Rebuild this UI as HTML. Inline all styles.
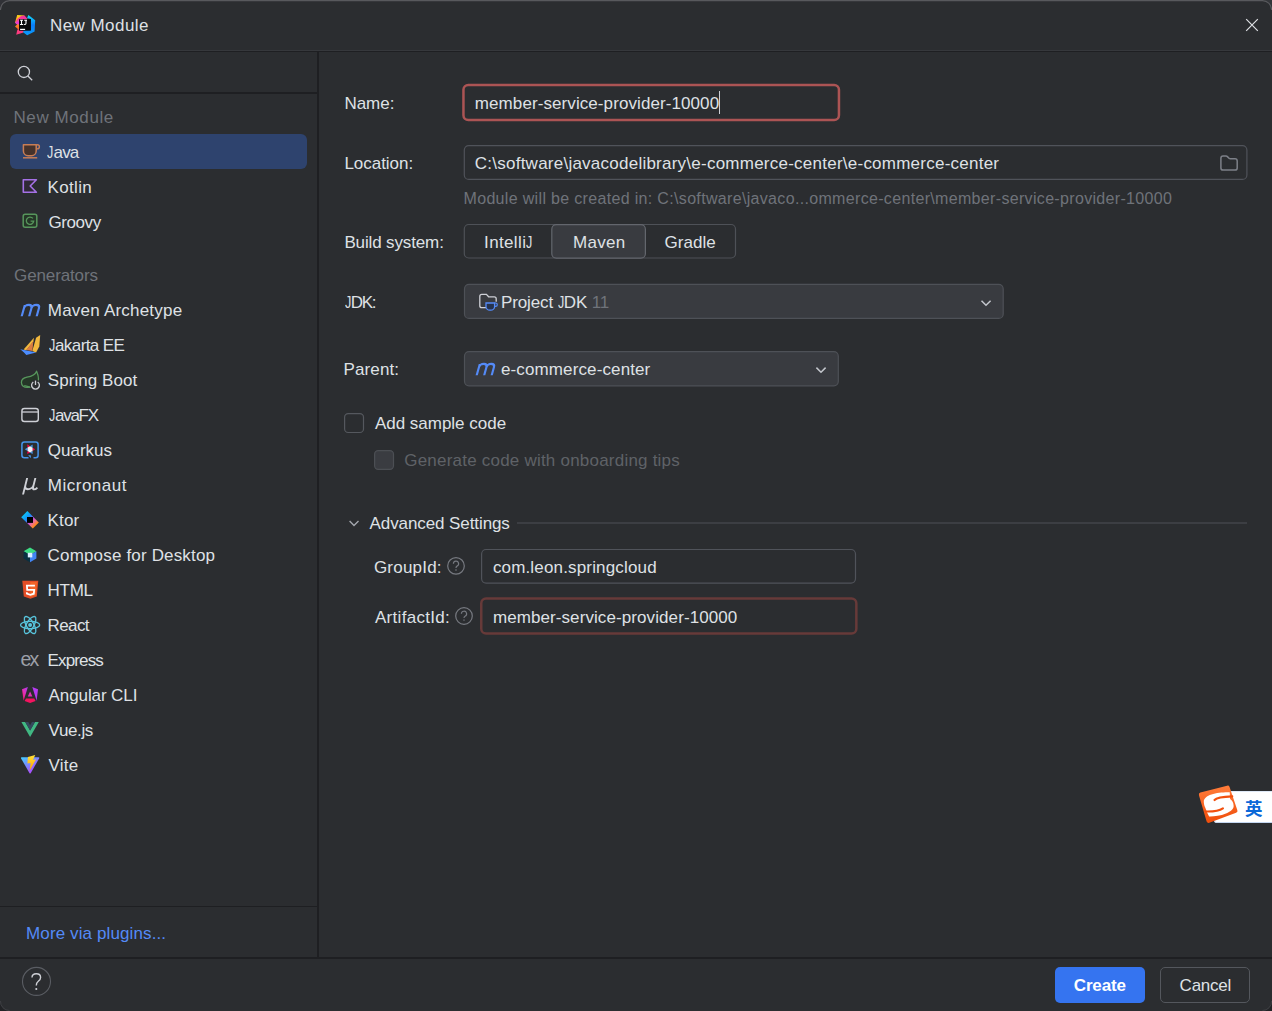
<!DOCTYPE html>
<html lang="en">
<head>
<meta charset="utf-8">
<title>New Module</title>
<style>
*{box-sizing:border-box;margin:0;padding:0}
html,body{width:1272px;height:1011px;overflow:hidden;background:#2b2d30}
body{font-family:"Liberation Sans","Noto Sans CJK SC",sans-serif;font-size:17px;color:#dfe1e5;position:relative}
.win{position:absolute;left:0;top:0;width:1272px;height:1011px;background:#2b2d30;overflow:hidden}

.abs{position:absolute}
.t{position:absolute;white-space:nowrap;line-height:20px;height:20px;margin-top:2px}
.hl{position:absolute;height:2px;background:#1e1f22}
.vl{position:absolute;width:2px;background:#1e1f22}
.gray{color:#6f737a}
.sel{position:absolute;left:10px;top:134px;width:297px;height:35px;border-radius:6px;background:#2e436e}
.inp{position:absolute;border:1px solid #4e5157;border-radius:5px;background:#2b2d30}
.combo{position:absolute;border:1px solid #4e5157;border-radius:5px;background:#393b40}
.cb{position:absolute;width:20px;height:20px;border:1px solid #6f737a;border-radius:4px}
svg{position:absolute;overflow:visible}
.J{display:inline-block;transform:scaleX(.74);transform-origin:0 0;margin-right:-2.3px;letter-spacing:0}
/*FIT*/
#title{left:49.9px !important;letter-spacing:0.461px}
#h1{left:13.5px !important;letter-spacing:0.586px}
#l1{left:47.4px !important;letter-spacing:-0.869px}
#l2{left:47.5px !important;letter-spacing:0.34px}
#l3{left:48.5px !important;letter-spacing:-0.42px}
#h2{left:14.1px !important;letter-spacing:-0.131px}
#l4{left:47.8px !important;letter-spacing:0.214px}
#l5{left:48.8px !important;letter-spacing:-0.586px}
#l6{left:47.8px !important;letter-spacing:0.06px}
#l7{left:48.8px !important;letter-spacing:-1.28px}
#l8{left:47.8px !important;letter-spacing:0.001px}
#l9{left:47.8px !important;letter-spacing:0.5px}
#l10{left:47.6px !important;letter-spacing:0.167px}
#l11{left:47.6px !important;letter-spacing:0.166px}
#l12{left:47.6px !important;letter-spacing:-0.301px}
#l13{left:47.6px !important;letter-spacing:-0.625px}
#l14{left:47.6px !important;letter-spacing:-0.872px}
#l15{left:48.6px !important;letter-spacing:-0.1px}
#l16{left:48.6px !important;letter-spacing:-0.38px}
#l17{left:48.6px !important;letter-spacing:0.201px}
#more{left:26.1px !important;letter-spacing:0.112px}
#create{left:1073.8px !important;letter-spacing:-0.16px}
#cancel{left:1179.6px !important;letter-spacing:-0.24px}
#r1{left:344.4px !important;letter-spacing:0.0px}
#v1{left:474.8px !important;letter-spacing:0.087px}
#r2{left:344.4px !important;letter-spacing:-0.025px}
#v2{left:474.8px !important;letter-spacing:0.242px}
#v3{left:463.5px !important;letter-spacing:0.329px}
#r3{left:344.4px !important;letter-spacing:-0.134px}
#b1{left:484.1px !important;letter-spacing:0.354px}
#b2{left:573.1px !important;letter-spacing:0.25px}
#b3{left:664.6px !important;letter-spacing:0.02px}
#r4{left:344.6px !important;letter-spacing:-1.27px}
#j1{left:501.0px !important;letter-spacing:-0.128px}
#r5{left:343.6px !important;letter-spacing:0.1px}
#p1{left:501.0px !important;letter-spacing:0.119px}
#c1{left:374.9px !important;letter-spacing:-0.012px}
#c2{left:404.2px !important;letter-spacing:0.218px}
#a1{left:369.6px !important;letter-spacing:-0.093px}
#g1{left:373.9px !important;letter-spacing:0.216px}
#g2{left:492.9px !important;letter-spacing:0.161px}
#g3{left:374.9px !important;letter-spacing:0.31px}
#g4{left:492.9px !important;letter-spacing:0.09px}
/*ENDFIT*/
</style>
</head>
<body>
<div class="win">

<svg id="bg" width="1272" height="1011" viewBox="0 0 1272 1011" style="left:0;top:0" fill="none">
<rect x="463.45" y="85.05" width="375.5" height="34.9" rx="4.8" stroke="#ac5454" stroke-width="2.5"/>
<rect x="464.3" y="145.6" width="782.6" height="33.8" rx="4.5" stroke="#50535a" stroke-width="1.2"/>
<rect x="464.3" y="224.5" width="271.2" height="33.5" rx="4.5" stroke="#4e5157" stroke-width="1.2"/>
<rect x="551.8" y="224.7" width="93.6" height="33.4" rx="4.5" fill="#393b40" stroke="#63666d" stroke-width="1.2"/>
<rect x="464.5" y="284.4" width="538.7" height="34" rx="4.5" fill="#393b40" stroke="#4e5157" stroke-width="1.2"/>
<rect x="464.5" y="351.7" width="373.8" height="34.1" rx="4.5" fill="#393b40" stroke="#4e5157" stroke-width="1.2"/>
<rect x="344.6" y="413.7" width="18.9" height="18.8" rx="3.6" stroke="#55585e" stroke-width="1.2"/>
<rect x="374.6" y="450.6" width="18.9" height="18.8" rx="3.6" fill="#3a3c41" stroke="#4c4f54" stroke-width="1.2"/>
<rect x="481.6" y="549.5" width="373.9" height="33.6" rx="4.5" stroke="#50535a" stroke-width="1.2"/>
<rect x="481.25" y="598.6" width="375.1" height="35" rx="4.8" stroke="#673a39" stroke-width="2.5"/>
</svg>
<!-- title bar -->
<div class="t" id="title" style="left:50px;top:14px">New Module</div>
<div class="hl" style="left:0;top:50px;width:1272px;height:1px;background:#36383c"></div><div class="hl" style="left:0;top:51px;width:1272px;height:1px"></div>

<!-- left panel -->
<div class="vl" style="left:317px;top:52px;height:906px"></div>
<div class="hl" style="left:0;top:92px;width:317px"></div>
<div class="t gray" id="h1" style="left:14px;top:106px">New Module</div>
<div class="sel"></div>
<div class="t" id="l1" style="left:48px;top:141px"><span class="J">J</span>ava</div>
<div class="t" id="l2" style="left:48px;top:176px">Kotlin</div>
<div class="t" id="l3" style="left:48px;top:211px">Groovy</div>
<div class="t gray" id="h2" style="left:14px;top:264px">Generators</div>
<div class="t" id="l4" style="left:48px;top:299px">Maven Archetype</div>
<div class="t" id="l5" style="left:48px;top:334px"><span class="J">J</span>akarta EE</div>
<div class="t" id="l6" style="left:48px;top:369px">Spring Boot</div>
<div class="t" id="l7" style="left:48px;top:404px"><span class="J">J</span>avaFX</div>
<div class="t" id="l8" style="left:48px;top:439px">Quarkus</div>
<div class="t" id="l9" style="left:48px;top:474px">Micronaut</div>
<div class="t" id="l10" style="left:48px;top:509px">Ktor</div>
<div class="t" id="l11" style="left:48px;top:544px">Compose for Desktop</div>
<div class="t" id="l12" style="left:48px;top:579px">HTML</div>
<div class="t" id="l13" style="left:48px;top:614px">React</div>
<div class="t" id="l14" style="left:48px;top:649px">Express</div>
<div class="t" id="l15" style="left:48px;top:684px">Angular CLI</div>
<div class="t" id="l16" style="left:48px;top:719px">Vue.js</div>
<div class="t" id="l17" style="left:48px;top:754px">Vite</div>
<div class="hl" style="left:0;top:906px;width:317px;height:1px"></div>
<div class="t" id="more" style="left:26px;top:922px;color:#548af7">More via plugins...</div>

<!-- bottom bar -->
<div class="hl" style="left:0;top:957px;width:1272px"></div>
<div class="abs" style="left:1055px;top:967px;width:90px;height:36px;border-radius:5px;background:#3574f0"></div>
<div class="t" id="create" style="left:1074px;top:974px;font-weight:bold;color:#fff">Create</div>
<div class="abs" style="left:1160px;top:967px;width:90px;height:36px;border-radius:5px;border:1px solid #54575d"></div>
<div class="t" id="cancel" style="left:1180px;top:974px">Cancel</div>

<!-- right form -->
<div class="t" id="r1" style="left:344px;top:92px">Name:</div>
<div class="t" id="v1" style="left:475px;top:92px">member-service-provider-10000</div>
<div class="abs caret" style="left:719px;top:91px;width:1px;height:23px;background:#ced0d6"></div>

<div class="t" id="r2" style="left:344px;top:152px">Location:</div>
<div class="t" id="v2" style="left:475px;top:152px">C:\software\javacodelibrary\e-commerce-center\e-commerce-center</div>
<div class="t gray" id="v3" style="left:464px;top:187px;font-size:16px">Module will be created in: C:\software\javaco...ommerce-center\member-service-provider-10000</div>

<div class="t" id="r3" style="left:344px;top:231px">Build system:</div>
<div class="t" id="b1" style="left:485px;top:231px">Intelli<span class="J">J</span></div>
<div class="t" id="b2" style="left:573px;top:231px">Maven</div>
<div class="t" id="b3" style="left:665px;top:231px">Gradle</div>

<div class="t" id="r4" style="left:344px;top:291px"><span class="J">J</span>DK:</div>
<div class="t" id="j1" style="left:501px;top:291px">Project <span class="J">J</span>DK <span class="gray">11</span></div>

<div class="t" id="r5" style="left:344px;top:358px">Parent:</div>
<div class="t" id="p1" style="left:500px;top:358px">e-commerce-center</div>

<div class="t" id="c1" style="left:374px;top:412px">Add sample code</div>
<div class="t" id="c2" style="left:404px;top:449px;color:#5f6267">Generate code with onboarding tips</div>

<div class="t" id="a1" style="left:369px;top:512px">Advanced Settings</div>
<div class="hl" style="left:517px;top:522px;width:730px;height:2px;background:#3c3e43"></div>

<div class="t" id="g1" style="left:374px;top:556px">GroupId:</div>
<div class="t" id="g2" style="left:493px;top:556px">com.leon.springcloud</div>

<div class="t" id="g3" style="left:374px;top:606px">ArtifactId:</div>
<div class="t" id="g4" style="left:493px;top:606px">member-service-provider-10000</div>


<!-- IME -->
<div class="abs" style="left:1214px;top:791px;width:70px;height:32px;background:#fff;border-radius:3px;box-shadow:inset 0 -1px 0 #c3d6f0,inset 0 1px 0 #dfe9f7"></div>
<div class="t" id="ime" style="left:1245px;top:797px;font-family:'Liberation Sans','Noto Sans CJK SC',sans-serif;font-weight:bold;font-size:17.5px;color:#0b68d8">英</div>
<!--ICONS-->
<svg id="ic" width="1272" height="1011" viewBox="0 0 1272 1011" style="left:0;top:0;pointer-events:none" fill="none">
<defs>
<linearGradient id="gIJ1" x1="0" y1="0" x2="0" y2="1"><stop offset="0" stop-color="#fdd21a"/><stop offset="1" stop-color="#fc5a2a"/></linearGradient>
<linearGradient id="gIJ2" x1="0" y1="0" x2="0" y2="1"><stop offset="0" stop-color="#10dcfc"/><stop offset="0.5" stop-color="#0b7dfa"/><stop offset="1" stop-color="#0b9dfb"/></linearGradient>
<linearGradient id="gKt" x1="0" y1="0" x2="1" y2="1"><stop offset="0.15" stop-color="#08c8f6"/><stop offset="0.4" stop-color="#1a8cf8"/><stop offset="0.56" stop-color="#c14fe0"/><stop offset="0.68" stop-color="#f0708a"/><stop offset="0.82" stop-color="#ff8a14"/></linearGradient>
<linearGradient id="gAn" x1="0" y1="1" x2="1" y2="0"><stop offset="0" stop-color="#fb0f55"/><stop offset="0.5" stop-color="#e231b9"/><stop offset="1" stop-color="#a83cf8"/></linearGradient>
<linearGradient id="gVi" x1="0" y1="0" x2="0.8" y2="1"><stop offset="0" stop-color="#41d1ff"/><stop offset="1" stop-color="#bd34fe"/></linearGradient>
<linearGradient id="gVb" x1="0" y1="0" x2="0" y2="1"><stop offset="0" stop-color="#ffe23a"/><stop offset="1" stop-color="#ffa000"/></linearGradient>
<linearGradient id="gSg" x1="0" y1="0" x2="0" y2="1"><stop offset="0" stop-color="#ff7a38"/><stop offset="1" stop-color="#f0500e"/></linearGradient>
</defs>

<!-- window corners -->
<path d="M0,0 H9 A9,9 0 0 0 0,9 Z" fill="#303136"/><path d="M1272,0 H1263 A9,9 0 0 1 1272,9 Z" fill="#34363a"/>
<path d="M0.5,10 A9,9 0 0 1 9.5,0.6 H1262.5 A9,9 0 0 1 1271.5,10" stroke="#58595d" stroke-width="1.2"/>
<path d="M0,1011 H9 A9,9 0 0 1 0,1002 Z" fill="#222326"/><path d="M1272,1011 H1263 A9,9 0 0 0 1272,1002 Z" fill="#222326"/>
<path d="M0.5,1001 A9,9 0 0 0 9.5,1010.5" stroke="#3e3f43" stroke-width="1"/><path d="M1271.5,1001 A9,9 0 0 1 1262.5,1010.5" stroke="#3e3f43" stroke-width="1"/>
<!-- IntelliJ logo -->
<g>
<polygon points="17.2,15 24.5,15.4 20,20 19.5,31 17.4,28.5 15,26.4 17.2,24.6 15,22.6" fill="url(#gIJ1)"/>
<polygon points="20.8,16.2 24.5,15.4 27.2,18.4 27,20 19,20 15,22.6 17.5,19" fill="#f5349b"/>
<polygon points="15,22.6 19.2,20 19.2,24.5 16.5,24.2" fill="#e63bd0"/>
<polygon points="16.2,34.7 17.4,29.5 24.4,30.4 23.4,32.4" fill="#fb3c7e"/>
<polygon points="27,18.2 28.4,15 35.2,20.2 34.6,31.4 27.2,35.2 23,32.2 24,30 31,30 31,19" fill="url(#gIJ2)"/>
<rect x="19" y="19.2" width="11.8" height="11.5" fill="#0a0a0c"/>
<rect x="20.1" y="28.8" width="5" height="1.2" fill="#fff"/>
<path d="M20,20.3h3M21.5,20.3v4.2M20,24.5h3M24.2,20.3h2.8M26,20.3v3c0,1.4-1.6,1.4-2.2,0.9" stroke="#fff" stroke-width="1.1"/>
</g>
<!-- close -->
<path d="M1246.2,19.2 L1257.8,30.8 M1257.8,19.2 L1246.2,30.8" stroke="#dfe1e5" stroke-width="1.2"/>
<!-- search -->
<circle cx="23.9" cy="71.9" r="5.6" stroke="#ced0d6" stroke-width="1.3"/>
<path d="M27.9,76 L32.2,80.2" stroke="#ced0d6" stroke-width="1.3"/>

<!-- Java -->
<path d="M23.4,144.7 H36.2 V151 A4.7,4.7 0 0 1 31.5,155.7 H28.1 A4.7,4.7 0 0 1 23.4,151 Z" fill="#45322b" stroke="#c77d55" stroke-width="1.5" stroke-linejoin="round"/>
<path d="M36.2,144.7 H37.3 A2.1,2.1 0 0 1 37.3,148.9 H36.2" stroke="#c77d55" stroke-width="1.4"/>
<path d="M23,157.8 H37.2" stroke="#c77d55" stroke-width="1.5"/>
<!-- Kotlin -->
<path d="M23.3,179.7 H36.4 L30.2,186 L36.4,192.3 H23.3 Z" fill="#2f2936" stroke="#a571e6" stroke-width="1.6" stroke-linejoin="round"/>
<!-- Groovy -->
<rect x="23.2" y="214.2" width="13.6" height="13" rx="2" fill="#253627" stroke="#57965c" stroke-width="1.5"/>
<path d="M32.9,218.4 A3.7,3.7 0 1 0 33.7,221.2 H30.6" stroke="#57965c" stroke-width="1.3"/>

<!-- Maven m -->
<g transform="translate(21.7,316.3) skewX(-15.5)" stroke="#548af7" stroke-width="2.2">
<path d="M0,0 V-11.4 M0,-8 C0,-10.4 1.9,-11.4 3.8,-11.4 C6,-11.4 7.5,-10.3 7.5,-8 V0 M7.5,-8 C7.5,-10.4 9.4,-11.4 11.3,-11.4 C13.5,-11.4 15,-10.3 15,-8 V0"/>
</g>
<!-- Jakarta EE -->
<polygon points="40.2,335.1 36.1,337.8 32.3,350.9 36.1,352.5 39.3,346.5" fill="#f2b83e"/>
<polygon points="33.9,337.8 23.6,349.6 26.3,350.3 33.4,341.5" fill="#f2b83e"/>
<polygon points="33.4,341.1 26.3,350 32.3,350.9" fill="#d97b42"/>
<polygon points="20.3,349.2 34,352 36.1,352.5 26.3,355 24,352.5" fill="#4c8dff"/>
<!-- Spring Boot -->
<path d="M36.6,371.2 C35,375.5 31,376.5 27,377.2 C23,378 21.4,380 21.4,382.4 C21.4,385.5 24,387.6 27.5,387.4 L31,387.2 C35,386.5 38.2,383.5 38.5,379 C38.6,376.5 37.6,373.5 36.6,371.2 Z" fill="#253627" stroke="#57965c" stroke-width="1.3" stroke-linejoin="round"/>
<path d="M24.2,385.6 L30.5,387.2" stroke="#57965c" stroke-width="1.2"/>
<circle cx="35.5" cy="385.2" r="5.6" fill="#2b2d30"/>
<path d="M33.3,382 A3.9,3.9 0 1 0 37.7,382" stroke="#ced0d6" stroke-width="1.3"/>
<path d="M35.5,380.6 V385" stroke="#ced0d6" stroke-width="1.3"/>
<!-- JavaFX -->
<rect x="21.9" y="408.5" width="16.4" height="13" rx="2.5" stroke="#ced0d6" stroke-width="1.4"/>
<path d="M21.9,412 H38.3" stroke="#ced0d6" stroke-width="1.3"/>
<!-- Quarkus -->
<path d="M28.5,457.7 H24.4 A2.5,2.5 0 0 1 21.9,455.2 V444.4 A2.5,2.5 0 0 1 24.4,441.9 H35.6 A2.5,2.5 0 0 1 38.1,444.4 V455.2 A2.5,2.5 0 0 1 35.6,457.7 H33.5" stroke="#4695eb" stroke-width="1.5"/>
<path d="M28.2,455 L30.6,458.2 L31,455.5" fill="#4695eb"/>
<polygon points="27.2,444.3 30,446.2 27.6,447.6" fill="#ff004a"/>
<polygon points="32.6,444.6 32.6,447.8 30,446.2" fill="#4695eb"/>
<polygon points="35.2,449.3 32.6,450.9 32.6,447.8" fill="#ff004a"/>
<polygon points="24.8,449.3 27.6,447.6 27.6,450.9" fill="#4695eb"/>
<polygon points="27.2,454 27.6,450.9 30,452.4" fill="#ff004a"/>
<polygon points="32.6,454 30,452.4 32.6,450.9" fill="#4695eb"/>
<polygon points="30,446.2 32.6,447.8 32.6,450.9 30,452.4 27.6,450.9 27.6,447.6" fill="#f3f3f5"/>
<!-- Micronaut mu -->
<g transform="translate(24.3,489.6) skewX(-14)" stroke="#ced0d6" stroke-width="1.9">
<path d="M0,-11.5 V5 M0,-4 C0,-1.2 1.6,-0.3 3.6,-0.3 C6,-0.3 8.2,-2 8.2,-5 V-11.5 M8.2,-11.5 V-2.6 C8.2,-0.8 9,-0.2 10,-0.2 C10.9,-0.2 11.8,-0.8 12.6,-2"/>
</g>
<!-- Ktor -->
<polygon points="27.4,510.9 38.8,522.6 32.8,528.5 21.2,517.2" fill="url(#gKt)"/>
<rect x="27" y="517" width="6" height="5.9" fill="#000"/>
<!-- Compose -->
<polygon points="30,547.6 36.4,551.3 30,555 23.6,551.3" fill="#3ddc84"/>
<polygon points="23.6,551.3 30,555 30,562.2 23.6,558.6" fill="#083042"/>
<polygon points="36.4,551.3 36.4,558.6 30,562.2 30,555" fill="#4285f4"/>
<rect x="27.8" y="552.8" width="4.5" height="4.6" fill="#d9efff"/>
<!-- HTML5 -->
<polygon points="22.3,580.7 38.3,580.7 36.8,596.6 30.3,598.7 23.8,596.6" fill="#e44d26"/>
<polygon points="30.3,582 37,582 35.7,595.6 30.3,597.3" fill="#f16529"/>
<path d="M34.9,585.7 H26.9 L27.2,589.9 H34.2 L33.8,593.7 L30.3,594.8 L26.9,593.7 L26.8,592.2" stroke="#fff" stroke-width="1.8"/>
<!-- React -->
<g stroke="#58c4dc" stroke-width="1.35">
<ellipse cx="30.1" cy="625" rx="9.6" ry="3.7"/>
<ellipse cx="30.1" cy="625" rx="9.6" ry="3.7" transform="rotate(60 30.1 625)"/>
<ellipse cx="30.1" cy="625" rx="9.6" ry="3.7" transform="rotate(120 30.1 625)"/>
</g>
<circle cx="30.1" cy="625" r="2" fill="#58c4dc"/>
<!-- Express -->
<text x="20.4" y="665.8" font-family="Liberation Sans, sans-serif" font-size="19.5" fill="#9da0a8" letter-spacing="-1.7">ex</text>
<!-- Angular -->
<polygon points="22,689.2 27.9,687.1 23.6,700.7" fill="url(#gAn)"/>
<polygon points="32.3,687.1 38,689.2 36.6,700.7" fill="#b63bf0"/>
<polygon points="30.1,691.6 32.4,696.4 27.8,696.4" fill="#e231b9"/>
<polygon points="26,698.4 34.2,698.4 35.6,700.9 30.1,703 24.6,700.9" fill="#f4135f"/>
<!-- Vue -->
<polygon points="21.4,722 25.2,722 30.1,730.5 35,722 38.8,722 30.1,737" fill="#41b883"/>
<polygon points="25.2,722 28.3,722 30.1,725.2 31.9,722 35,722 30.1,730.5" fill="#35495e"/>
<!-- Vite -->
<path d="M21.6,757.3 L38.6,757.3 Q39.6,757.4 39.1,758.4 L30.8,773 Q30.1,774 29.4,773 L21.1,758.4 Q20.6,757.4 21.6,757.3 Z" fill="url(#gVi)"/>
<polygon points="35.2,754.9 27.9,757.1 27.4,763.6 30.6,763 29.6,770.7 36.1,759.2 33,759.9" fill="url(#gVb)"/>

<!-- folder (location) -->
<path d="M1220.9,158.2 A2.2,2.2 0 0 1 1223.1,156 H1226 Q1226.8,156 1227.4,156.6 L1229,158.2 Q1229.6,158.8 1230.4,158.8 H1235 A2.2,2.2 0 0 1 1237.2,161 V167.9 A2.2,2.2 0 0 1 1235,170.1 H1223.1 A2.2,2.2 0 0 1 1220.9,167.9 Z" stroke="#7d8088" stroke-width="1.5" stroke-linejoin="round"/>
<!-- chevrons -->
<path d="M981.5,300.7 L986,305.3 L990.6,300.7" stroke="#c3c6cc" stroke-width="1.5"/>
<path d="M816.4,367.6 L821,372.2 L825.6,367.6" stroke="#c3c6cc" stroke-width="1.5"/>
<path d="M349.6,521 L354,525.4 L358.5,521" stroke="#a4a7ae" stroke-width="1.4"/>
<!-- JDK icon -->
<path d="M486,307.7 H481.8 A2,2 0 0 1 479.8,305.7 V296.4 A2,2 0 0 1 481.8,294.4 H486.4 L488.6,296.8 H494.2 A2,2 0 0 1 496.2,298.8 V301.8" stroke="#ced0d6" stroke-width="1.3"/>
<path d="M486,303 H494.6 V306.4 A3.8,3.8 0 0 1 490.8,310.2 H489.8 A3.8,3.8 0 0 1 486,306.4 Z" fill="#25324d" stroke="#548af7" stroke-width="1.3"/>
<path d="M494.6,303 H495.6 A1.7,1.7 0 0 1 495.6,306.4 H494.6" stroke="#548af7" stroke-width="1.2"/>
<!-- parent maven m -->
<g transform="translate(476.7,375.3) skewX(-15.5)" stroke="#548af7" stroke-width="2.2">
<path d="M0,0 V-11.4 M0,-8 C0,-10.4 1.9,-11.4 3.8,-11.4 C6,-11.4 7.5,-10.3 7.5,-8 V0 M7.5,-8 C7.5,-10.4 9.4,-11.4 11.3,-11.4 C13.5,-11.4 15,-10.3 15,-8 V0"/>
</g>
<!-- big help -->
<circle cx="36.5" cy="981.4" r="14" stroke="#5a5d63" stroke-width="1.1"/>
<path d="M32,977.6 C32,975 34,973.8 36.3,973.8 C38.8,973.8 40.6,975.3 40.6,977.5 C40.6,979.3 39.6,980.3 38.3,981.3 C37,982.3 36.3,983.2 36.3,985.6" stroke="#ced0d6" stroke-width="1.4"/>
<circle cx="36.3" cy="989" r="1.05" fill="#ced0d6"/>
<!-- help icons -->
<g stroke="#777a81" stroke-width="1.2">
<circle cx="456" cy="565.9" r="8.3"/>
<path d="M453.4,563.7 A2.6,2.6 0 1 1 457,566.1 C456.2,566.5 456,567 456,568 M456,569.3 V570.7"/>
<circle cx="464" cy="616" r="8.3"/>
<path d="M461.4,613.8 A2.6,2.6 0 1 1 465,616.2 C464.2,616.6 464,617.1 464,618.1 M464,619.4 V620.8"/>
</g>
<!-- sogou -->
<g transform="translate(1192 778) scale(0.06289)">
<polygon points="142,264 566,154 690,523 264,681" fill="url(#gSg)" stroke="url(#gSg)" stroke-width="66" stroke-linejoin="round"/>
<path d="M600,228 C420,222 185,262 188,380 C190,450 225,480 238,545 L272,612 C340,614 450,604 540,565 C620,528 665,490 662,440 C660,395 640,360 606,335 Z" fill="#fff"/>
<path d="M640,292 C520,296 390,312 358,350" stroke="#f2500f" stroke-width="34" stroke-linecap="round"/>
<path d="M215,532 C330,535 440,518 492,482" stroke="#f2500f" stroke-width="34" stroke-linecap="round"/>
</g>
</svg>
<!--ENDICONS-->
</div>
</body>
</html>
